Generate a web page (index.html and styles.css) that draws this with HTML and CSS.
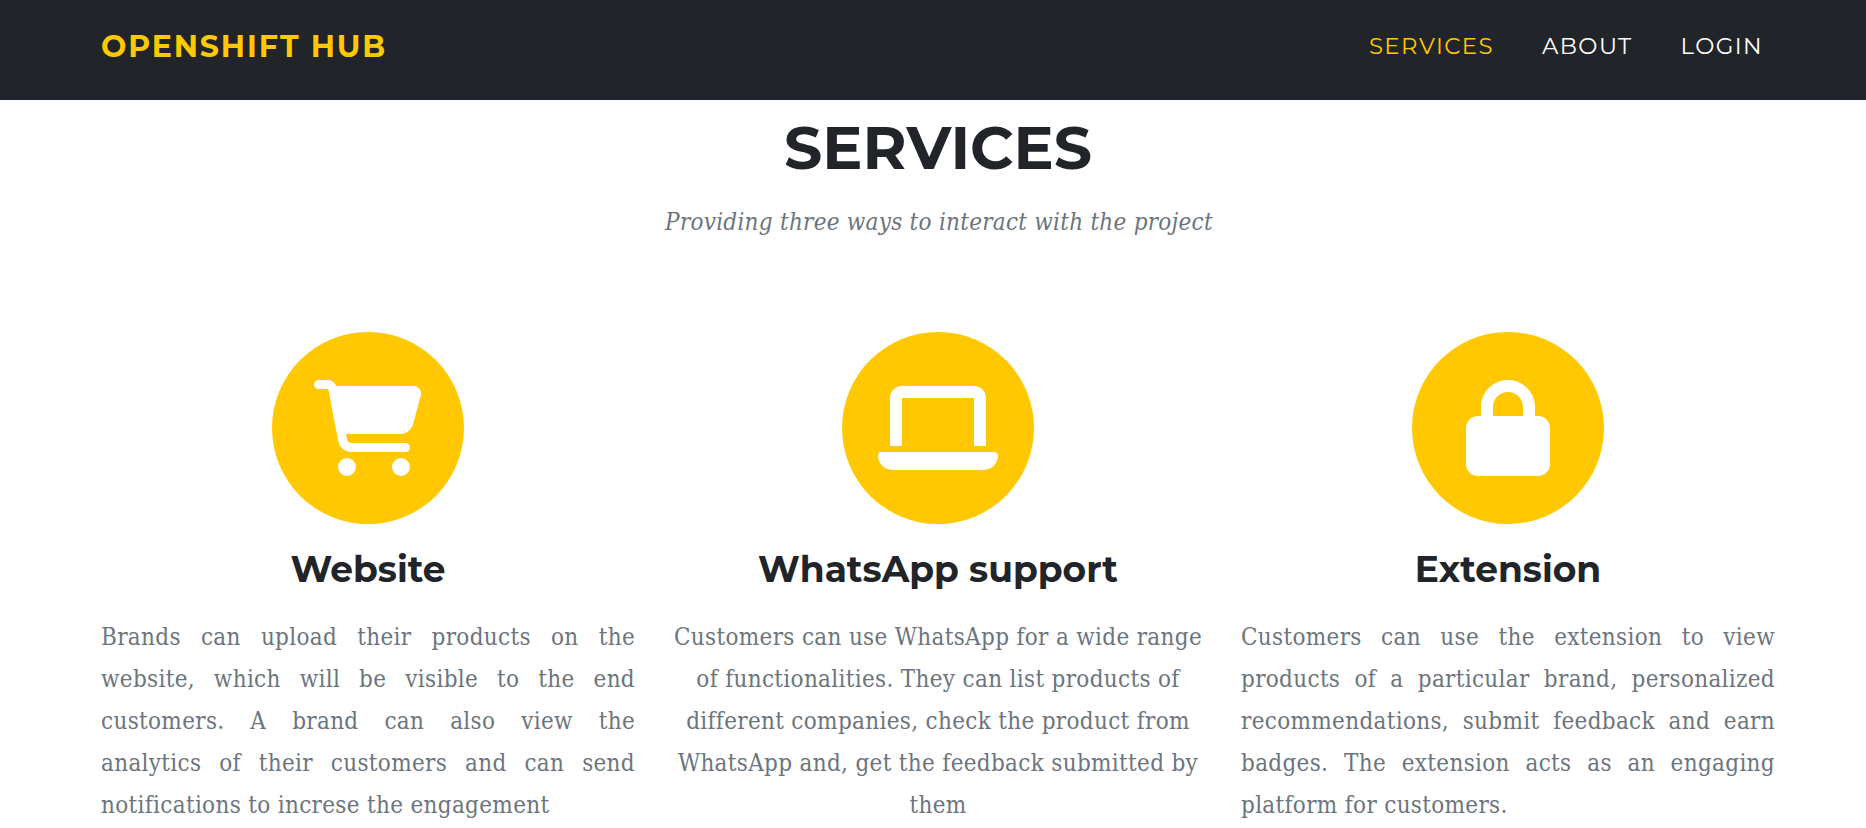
FILE: index.html
```
<!DOCTYPE html>
<html lang="en">
<head>
  <meta charset="UTF-8">
  <title>Openshift Hub</title>
  <link rel="stylesheet" href="styles.css">
</head>
<body>
  <nav class="navbar">
    <div class="container navbar-inner">
      <a class="brand" href="#">OPENSHIFT HUB</a>
      <ul class="nav-links">
        <li><a class="active" href="#services">SERVICES</a></li>
        <li><a href="#about">ABOUT</a></li>
        <li><a href="#login">LOGIN</a></li>
      </ul>
    </div>
  </nav>

  <section class="services" id="services">
    <div class="container">
      <h2 class="section-heading">SERVICES</h2>
      <h3 class="section-subheading">Providing three ways to interact with the project</h3>
      <div class="row">
        <div class="service">
          <div class="icon">
            <svg viewBox="0 0 576 512"><path d="M0 24C0 10.7 10.7 0 24 0H69.500c22 0 41.500 12.800 50.600 32h411c26.300 0 45.500 25 38.600 50.400l-41 152.300c-8.500 31.400-37 53.300-69.500 53.300H170.700l5.400 28.500c2.200 11.300 12.100 19.500 23.600 19.500H488c13.300 0 24 10.700 24 24s-10.700 24-24 24H199.700c-34.600 0-64.300-24.600-70.700-58.500L77.400 54.500c-.7-3.800-4-6.500-7.900-6.500H24C10.700 48 0 37.300 0 24zM128 464a48 48 0 1 1 96 0 48 48 0 1 1-96 0zm336-48a48 48 0 1 1 0 96 48 48 0 1 1 0-96z"/></svg>
          </div>
          <h4>Website</h4>
          <p class="justified">Brands can upload their products on the website, which will be visible to the end customers. A brand can also view the <span class="nowrap">analytics of</span> their customers and can send notifications to increse the engagement</p>
        </div>
        <div class="service">
          <div class="icon">
            <svg viewBox="0 0 640 512"><path d="M128 32C92.700 32 64 60.700 64 96V352h64V96H512V352h64V96c0-35.300-28.700-64-64-64H128zM19.200 384C8.600 384 0 392.600 0 403.200C0 445.600 34.400 480 76.800 480H563.200c42.400 0 76.800-34.400 76.800-76.800c0-10.600-8.600-19.200-19.200-19.200H19.200z"/></svg>
          </div>
          <h4>WhatsApp support</h4>
          <p>Customers can use WhatsApp for a wide range of functionalities. They can list products of different companies, check the product from WhatsApp and, get the feedback submitted by them</p>
        </div>
        <div class="service">
          <div class="icon">
            <svg viewBox="0 0 448 512"><path d="M144 144v48H304V144c0-44.200-35.800-80-80-80s-80 35.800-80 80zM80 192V144C80 64.500 144.500 0 224 0s144 64.500 144 144v48h16c35.300 0 64 28.700 64 64V448c0 35.300-28.700 64-64 64H64c-35.300 0-64-28.700-64-64V256c0-35.300 28.700-64 64-64H80z"/></svg>
          </div>
          <h4>Extension</h4>
          <p class="justified">Customers can use the extension to view products of a particular brand, personalized recommendations, submit feedback and earn badges. The extension acts as an engaging platform for customers.</p>
        </div>
      </div>
    </div>
  </section>
</body>
</html>
```
FILE: styles.css
```
* {
  box-sizing: border-box;
}

body {
  margin: 0;
  height: 828px;
  overflow: hidden;
  background: #fff;
  color: #212529;
  font-family: "Roboto Slab", "DejaVu Serif Condensed", "DejaVu Serif", serif;
  font-size: 24px;
  line-height: 1.5;
}

h2, h3, h4, p, ul {
  margin: 0;
  padding: 0;
}

.container {
  width: 1710px;
  margin-left: 83px;
  padding: 0 18px;
}

.navbar {
  height: 100px;
  background: #212529;
  font-family: Montserrat, Inter, sans-serif;
}

.navbar-inner {
  display: flex;
  justify-content: space-between;
  padding-top: 24px;
}

.navbar a {
  color: #fff;
  letter-spacing: 0.0625em;
  text-decoration: none;
}

.navbar .brand {
  color: #ffc800;
  font-size: 30px;
  font-weight: 700;
  line-height: 45px;
}

.nav-links {
  display: flex;
  gap: 48px;
  padding-right: 12px;
  list-style: none;
  font-size: 22.8px;
  line-height: 45px;
}

.navbar .active {
  color: #ffc800;
}

.section-heading {
  padding-top: 12px;
  font: 700 60px/72px Montserrat, Inter, sans-serif;
  text-align: center;
}

.section-subheading {
  margin: 20px 0 92px;
  padding-left: 2px;
  color: #6c757d;
  font-size: 24px;
  font-style: italic;
  font-weight: 400;
  letter-spacing: 0.26px;
  line-height: 36px;
  text-align: center;
}

.row {
  display: grid;
  grid-template-columns: repeat(3, 1fr);
  gap: 36px;
}

.service {
  text-align: center;
}

.icon {
  display: flex;
  align-items: center;
  justify-content: center;
  width: 192px;
  height: 192px;
  margin: 0 auto;
  border-radius: 50%;
  background: #ffc800;
}

.icon svg {
  height: 96px;
  fill: #fff;
}

.service h4 {
  margin: 24px 0 25px;
  font: 700 36px/43px Montserrat, Inter, sans-serif;
}

.service p {
  color: #6c757d;
  letter-spacing: 0.32px;
  line-height: 42px;
}

.service .justified {
  text-align: justify;
}

.nowrap {
  white-space: nowrap;
}
```
